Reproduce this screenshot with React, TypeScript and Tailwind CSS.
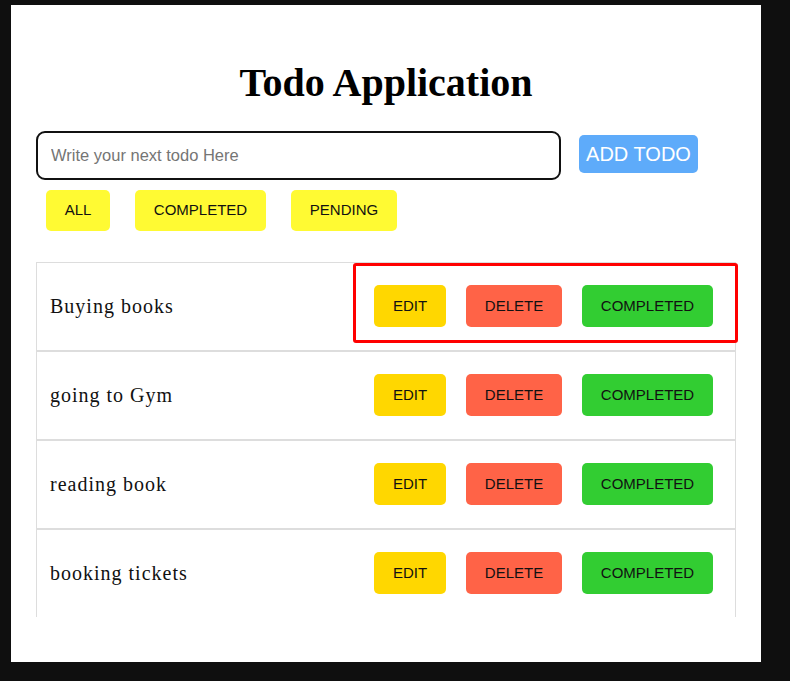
import React from "react";

const todos = ["Buying books", "going to Gym", "reading book", "booking tickets"];

export default function App() {
  return (
    <div className="min-h-[681px] w-[790px] bg-[#0f0f0f] pt-[5px] pl-[11px]">
      <div className="relative flex h-[657px] w-[750px] flex-col bg-white px-[25px]">
        <h1
          className="mt-[54px] h-[48px] text-center text-[40px] font-bold leading-[48px] text-black"
          style={{ fontFamily: '"Liberation Serif", "Times New Roman", serif' }}
        >
          Todo Application
        </h1>
        <div className="mt-[24px] flex items-start" style={{ fontFamily: '"Liberation Sans", Arial, sans-serif' }}>
          <input
            className="h-[49px] w-[525px] rounded-[9px] border-2 border-[#111] px-[13px] text-[16.5px] text-black outline-none placeholder:text-[#757575]"
            placeholder="Write your next todo Here"
          />
          <button className="ml-[18px] mt-[4px] h-[38px] w-[119px] rounded-[5px] bg-[#5eabfa] text-[20px] text-white">
            ADD TODO
          </button>
        </div>
        <div
          className="mt-[10px] flex gap-[25px] pl-[10px] text-[15px] text-[#111]"
          style={{ fontFamily: '"Liberation Sans", Arial, sans-serif' }}
        >
          <button className="h-[41px] w-[64px] rounded-[5px] bg-[#fffa33]">ALL</button>
          <button className="h-[41px] w-[131px] rounded-[5px] bg-[#fffa33]">COMPLETED</button>
          <button className="h-[41px] w-[106px] rounded-[5px] bg-[#fffa33]">PENDING</button>
        </div>
        <div className="mt-[31px] h-[355px] overflow-hidden">
          {todos.map((t) => (
            <div key={t} className="flex h-[89px] items-center border border-[#dddddd] pb-[1px] pl-[13px] pr-[22px]">
              <span
                className="flex-1 text-[20px] tracking-[1px] text-[#111]"
                style={{ fontFamily: '"Liberation Serif", "Times New Roman", serif' }}
              >
                {t}
              </span>
              <div
                className="flex gap-[20px] text-[15px] text-[#111]"
                style={{ fontFamily: '"Liberation Sans", Arial, sans-serif' }}
              >
                <button className="h-[42px] w-[72px] rounded-[5px] bg-[#ffd700]">EDIT</button>
                <button className="h-[42px] w-[96px] rounded-[5px] bg-[#ff6347]">DELETE</button>
                <button className="h-[42px] w-[131px] rounded-[5px] bg-[#32cd32]">COMPLETED</button>
              </div>
            </div>
          ))}
        </div>
        <div className="pointer-events-none absolute left-[342px] top-[258px] h-[80px] w-[385px] rounded-[3px] border-[3px] border-[#ff0000]" />
      </div>
    </div>
  );
}
